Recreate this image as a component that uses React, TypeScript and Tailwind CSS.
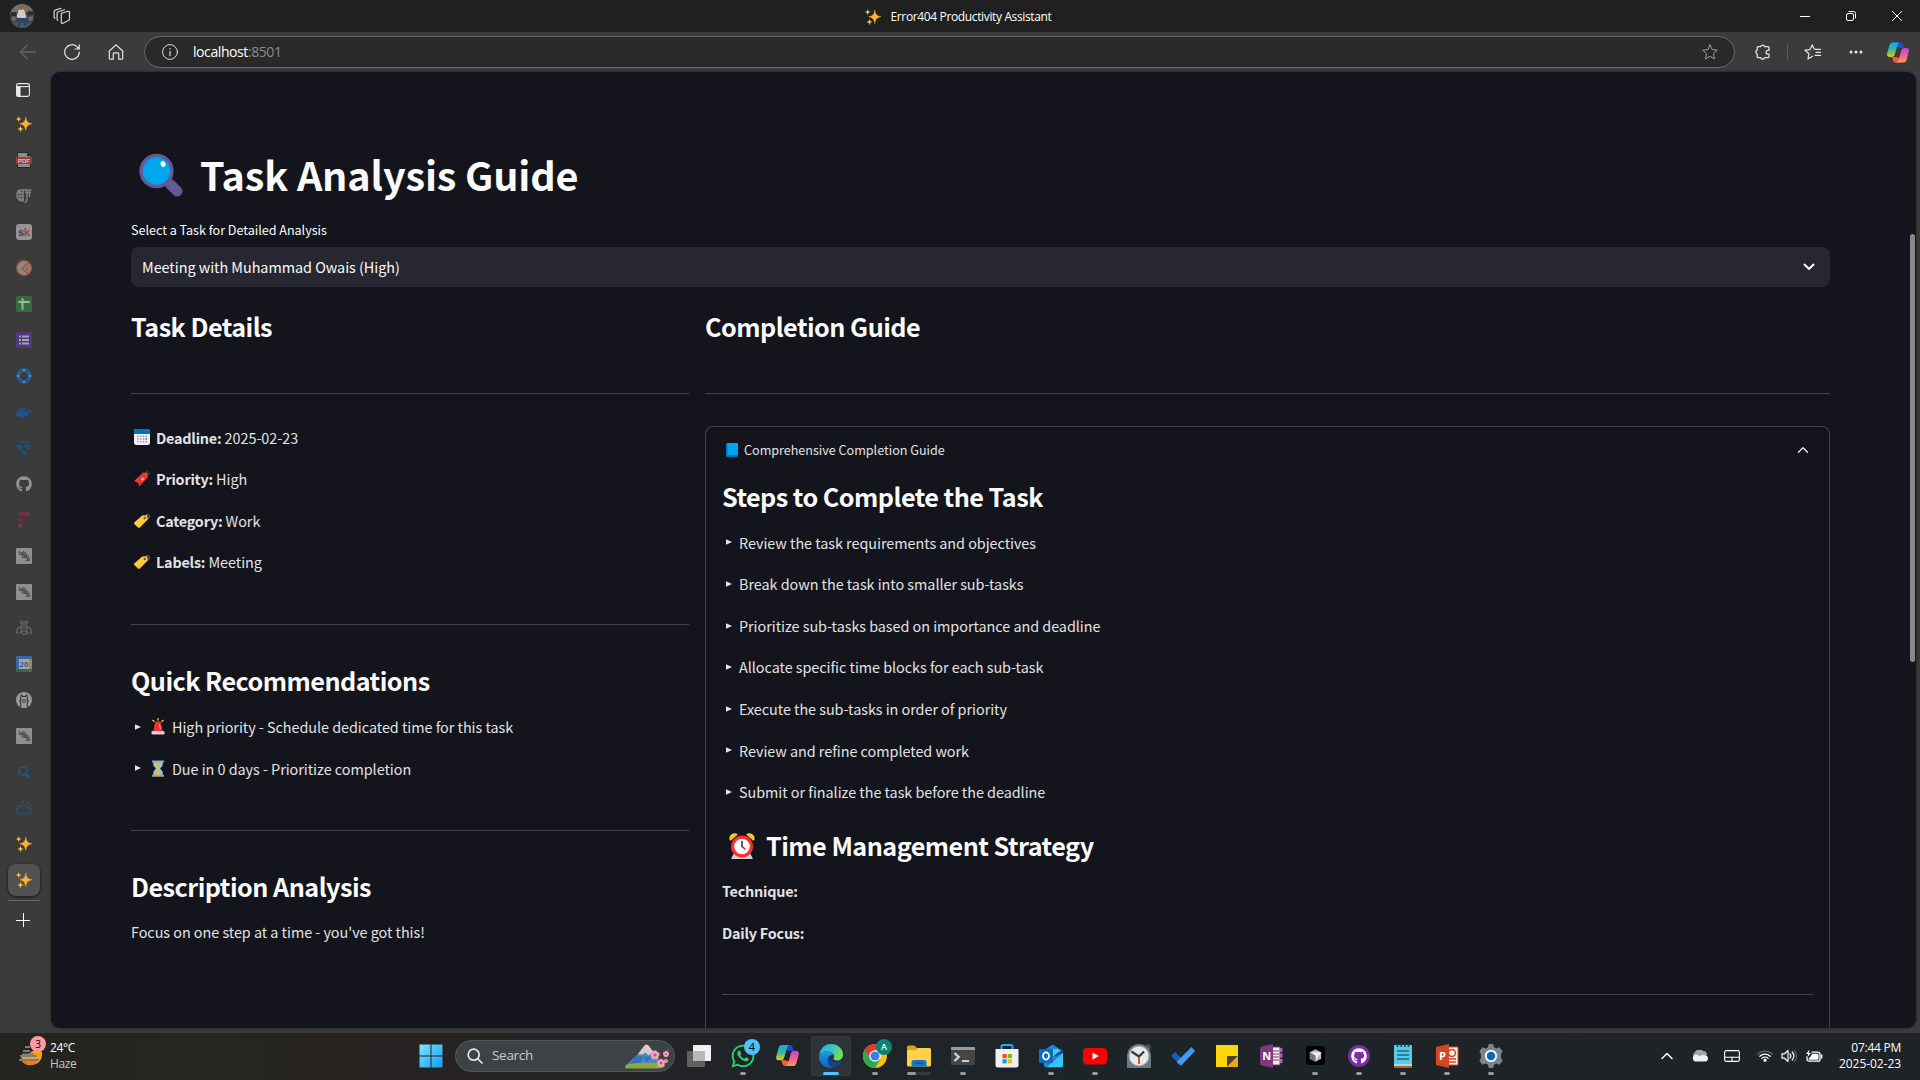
import React from "react";
import { FaGithub, FaWhatsapp, FaDocker } from "react-icons/fa";

const SANS = "font-['Noto_Sans_CJK_SC','Open_Sans',sans-serif]";

/* ---------- small drawings ---------- */

const Sparkles = ({ className = "size-4" }: { className?: string }) => (
  <svg viewBox="0 0 16 16" className={className}>
    <path d="M9.800.9c.6 4.500 1.800 5.900 6.200 6.800-4.400 1-5.600 2.500-6.200 7-.7-4.500-1.900-6-6.200-7 4.300-.9 5.500-2.300 6.200-6.800z" fill="#ffb02e" stroke="#ffb02e" strokeWidth=".4" strokeLinejoin="round" />
    <path d="M2.700.6c.3 1.700.8 2.200 2.400 2.500-1.600.4-2.100.9-2.400 2.500C2.400 4 1.900 3.500.3 3.100 1.900 2.800 2.400 2.300 2.700.6zM4.500 10.200c.3 1.900.9 2.400 2.700 2.700-1.800.4-2.400.9-2.700 2.800-.3-1.900-.9-2.400-2.700-2.800 1.800-.3 2.400-.8 2.700-2.700z" fill="#fcd53f" stroke="#fcd53f" strokeWidth=".3" />
  </svg>
);

const Magnifier = () => (
  <svg viewBox="0 0 44 44" className="h-11 w-11 shrink-0">
    <path d="M31 31l7.200 7.200" stroke="#635994" strokeWidth="10.500" strokeLinecap="round" />
    <path d="M26 26l5 5" stroke="#635994" strokeWidth="4" />
    <circle cx="17.500" cy="18" r="15.500" fill="#00a6ed" stroke="#635994" strokeWidth="3.400" />
    <ellipse cx="24" cy="11" rx="2.400" ry="3" fill="#fff" transform="rotate(-25 24 11)" />
  </svg>
);

const Calendar = () => (
  <svg viewBox="0 0 16 16" className="size-4">
    <rect width="16" height="16" rx="2.500" fill="#f3eef8" />
    <path d="M0 5V2.500A2.500 2.500 0 012.500 0h11A2.500 2.500 0 0116 2.500V5z" fill="#0074ba" />
    {[6.400, 9.200, 12].map((y) =>
      [3.200, 6, 8.800, 11.500].map((x) => (
        <rect key={x + "-" + y} x={x} y={y} width="1.500" height="1.500" rx=".4" fill={x === 11.500 && y === 9.200 ? "#0074ba" : "#998ea4"} />
      ))
    )}
  </svg>
);

const Tag = ({ color, red }: { color: string; red?: boolean }) => (
  <svg viewBox="0 0 16 16" className="size-4">
    {red ? (
      <>
        <path d="M0 10L9.200 1.400l4.200.6.500 4.200L5 15.500l-.6-3.500z" fill={color} />
        <path d="M8.500 6l.7 1.500 1.500.4-1.500.6-.6 1.500-.6-1.500-1.500-.6L8 7.500z" fill="#fcd5dc" />
        <path d="M12 3.500c1.500.5 3.500-.3 3.800-1.700M12 3c0-1.200.5-2.300 1.300-2.800" stroke="#a56953" fill="none" strokeWidth=".9" />
      </>
    ) : (
      <>
        <path d="M.5 9.300L8.200 2.400 13 2l1 4.300-7.900 8c-.8.8-1.500.8-2.300 0L.5 11.200c-.7-.7-.7-1.200 0-1.900z" fill={color} />
        <circle cx="10.800" cy="5" r="1.200" fill="#7d4533" />
        <path d="M10.800 5c.2-4.500 5.200-4 4.600-1.200-.3 1.200-1.500 2-2.300 2.200" stroke="#9b9b9b" fill="none" strokeWidth=".9" />
      </>
    )}
  </svg>
);

const Siren = () => (
  <svg viewBox="0 0 16 17" className="h-[17px] w-4">
    <path d="M3.200 14l1.500-7.500a3.300 3.300 0 016.600 0L12.800 14z" fill="#f8312f" />
    <path d="M9.500 6.500l.8 4" stroke="#f8a8a8" strokeWidth="1" strokeLinecap="round" />
    <rect x="1.500" y="13" width="13" height="3.500" rx="1.200" fill="#d3d3d3" />
    <path d="M8 0v2.600M2.500 2l2 1.800M13.500 2l-2 1.800" stroke="#fcd53f" strokeWidth="1.200" />
  </svg>
);

const Hourglass = () => (
  <svg viewBox="0 0 16 17" className="h-[17px] w-4">
    <path d="M3.300 2h9.400v2.700c0 2-2.500 2.700-2.500 3.800s2.500 2 2.500 4V15H3.300v-2.500c0-2 2.500-2.900 2.500-4s-2.500-1.800-2.500-3.800z" fill="#8ecbf0" />
    <path d="M4.500 4.500h7L8.500 8v3l3 2.500V15h-7v-1.500l3-2.500V8z" fill="#ffb02e" />
    <rect x="2" y=".5" width="12" height="2" rx=".5" fill="#9aa5b1" />
    <rect x="2" y="14.700" width="12" height="2" rx=".5" fill="#9aa5b1" />
  </svg>
);

const Book = () => (
  <svg viewBox="0 0 12 14" className="h-[14px] w-3">
    <rect width="12" height="14" rx="1" fill="#0074ba" />
    <rect x="1.500" width="10.500" height="12" rx=".6" fill="#00a6ed" />
  </svg>
);

const Alarm = () => (
  <svg viewBox="0 0 28 28" className="size-7 shrink-0">
    <path d="M6 21l-3 6h22l-3-6z" fill="#d3d3d3" />
    <path d="M1.500 7.500C.6 3.200 5.500-.3 10 2.200L3 8.500c-.6.400-1.300 0-1.500-1zM26.500 7.500c.9-4.300-4-7.800-8.500-5.300l7 6.300c.6.400 1.300 0 1.500-1z" fill="#f9c23c" />
    <circle cx="14" cy="14.500" r="11" fill="#f8312f" />
    <circle cx="14" cy="14.500" r="7.800" fill="#fff" />
    <path d="M14 9.500v5" stroke="#212121" strokeWidth="1.400" strokeLinecap="round" fill="none" />
    <path d="M14 14.500l3 2.500" stroke="#ca0b4a" strokeWidth="1.400" strokeLinecap="round" />
  </svg>
);

const Copilot = ({ className, id }: { className: string; id: string }) => (
  <svg viewBox="0 0 24 22" className={className}>
    <defs>
      <linearGradient id={id + "a"} x1="0" y1="0" x2="0" y2="1">
        <stop offset="0" stopColor="#1ba8f0" />
        <stop offset=".45" stopColor="#2fb6a8" />
        <stop offset="1" stopColor="#f0c80a" />
      </linearGradient>
      <linearGradient id={id + "b"} x1="0" y1="0" x2="0" y2="1">
        <stop offset="0" stopColor="#b04be8" />
        <stop offset=".5" stopColor="#ef5a92" />
        <stop offset="1" stopColor="#ff9a55" />
      </linearGradient>
    </defs>
    <path d="M10 0h4.500c1.600 0 2.400 1 2.900 2.500L18.500 6h-5L10 4z" fill="#1c4fd6" />
    <path d="M14 22H9.500c-1.600 0-2.400-1-2.900-2.500L5.500 16h5l3.500 2z" fill="#f4602c" />
    <path d="M6.500 0H14c-1.300.3-2 1.200-2.400 2.600L8.500 13c-.6 2-1.500 3-3.300 3H2.800C.5 16-.3 14.300.2 12L2.500 3.500C3.200 1.200 4.500 0 6.500 0z" fill={"url(#" + id + "a)"} />
    <path d="M17.500 22H10c1.300-.3 2-1.200 2.400-2.600L15.500 9c.6-2 1.500-3 3.300-3h2.400c2.300 0 3.100 1.700 2.600 4l-2.300 8.500c-.7 2.300-2 3.500-4 3.500z" fill={"url(#" + id + "b)"} />
  </svg>
);

/* ---------- browser chrome ---------- */

const line = { fill: "none", stroke: "currentColor", strokeLinecap: "round" as const, strokeLinejoin: "round" as const };

function TitleBar() {
  return (
    <div className="flex h-8 shrink-0 items-center bg-[#202020] text-white">
      <div className="flex flex-1 items-center gap-5 pl-[10px]">
        <svg viewBox="0 0 24 24" className="size-6">
          <defs><clipPath id="av"><circle cx="12" cy="12" r="12" /></clipPath></defs>
          <g clipPath="url(#av)">
            <rect width="24" height="24" fill="#45434a" />
            <path d="M0 0h24v8l-5-2-4 3-6-2-9 3z" fill="#77716d" />
            <path d="M1 8h5v4H1zM18 8h5v3h-5z" fill="#302b33" />
            <path d="M3 12l4 2-2 3-4-1zM18 13l5-1v4l-4 1z" fill="#69676c" />
            <path d="M0 19l6-1 12 1 6-1v6H0z" fill="#41604a" />
            <circle cx="11.500" cy="3.500" r="2" fill="#8c5f48" />
            <path d="M8.500 6l5.500-.5 2.500 7.500-2.500 2-5.500-1-2-1z" fill="#d5cabc" />
            <path d="M8.500 14h7l3 3-2 5h-2l-1-4-2.500 1-1.500 4H7.500z" fill="#2c4273" />
          </g>
        </svg>
        <svg viewBox="0 0 18 18" className="-ml-px size-[18px] text-[#d8d8d8]" {...line} strokeWidth="1.200">
          <path d="M8.300 6.300l6.700-2c.8-.2 1.500.2 1.500 1V12c0 .7-.3 1.200-1 1.500l-5.600 2.700c-.8.4-1.600 0-1.600-.9V7.600c0-.7.2-1.100 0-1.300zM4.800 13.200c-.6-.1-.7-.5-.7-1.100V6.300c0-.8.4-1.300 1.100-1.500l6.300-2M1.900 11.200c-.6-.1-.8-.5-.8-1.100V4.500c0-.8.400-1.200 1.100-1.400l5.800-1.800" />
        </svg>
      </div>
      <div className="flex items-center gap-[9px] pl-[5px] pt-px">
        <Sparkles />
        <span className="font-['Open_Sans',sans-serif] text-[12px] tracking-[-0.360px]">Error404 Productivity Assistant</span>
      </div>
      <div className="flex flex-1 items-center justify-end gap-9 pr-[18px]">
        <svg viewBox="0 0 10 10" className="size-[10px]" {...line}><path d="M0 5.500h10" /></svg>
        <svg viewBox="0 0 10 10" className="size-[10px]" {...line}><rect x=".5" y="2.500" width="7" height="7" rx="1.500" /><path d="M3 .5h4.500a2 2 0 012 2V7" /></svg>
        <svg viewBox="0 0 10 10" className="size-[10px]" {...line}><path d="M.3.300l9.400 9.400M9.700.3L.3 9.700" /></svg>
      </div>
    </div>
  );
}

function Toolbar() {
  return (
    <div className="flex h-10 shrink-0 items-center text-[#e4e4e4]">
      <div className="flex w-[144px] items-center gap-7 pl-5">
        <svg viewBox="0 0 16 16" className="size-4 text-[#7b7b7b]" {...line}><path d="M15.500 8H.5M7.300 1L.5 8l6.800 7" /></svg>
        <svg viewBox="0 0 16 16" className="size-4" {...line} strokeWidth="1.200"><path d="M15.300 8A7.300 7.300 0 1112.900 2.600L15.200 5M15.200.9V5h-4.100" /></svg>
        <svg viewBox="0 0 16 16" className="size-4" {...line} strokeWidth="1.200"><path d="M1.300 7L8 .9 14.700 7v7.200a1 1 0 01-1 1h-3v-5.500a.8.800 0 00-.8-.8H6.100a.8.800 0 00-.8.8v5.500h-3a1 1 0 01-1-1z" /></svg>
      </div>
      <div className="flex h-8 w-[1591px] items-center rounded-full border border-[#686868] bg-[#292929] pl-[17px] pr-4">
        <svg viewBox="0 0 16 16" className="size-4 text-[#d8d8d8]" {...line}><circle cx="8" cy="8" r="7.400" /><path d="M8 7.300v4.200M8 4.700v.2" strokeWidth="1.300" /></svg>
        <span className="ml-[15px] flex-1 font-['Open_Sans',sans-serif] text-[14px] leading-5 tracking-[-0.420px] text-white">localhost<span className="text-[#8c8c8c]">:8501</span></span>
        <svg viewBox="0 0 16 16" className="size-4 text-[#a0a0a0]" {...line}><path d="M8 .9l2.200 4.700 5 .6-3.700 3.500 1 5.200L8 12.400l-4.500 2.500 1-5.200L.8 6.200l5-.6z" /></svg>
      </div>
      <div className="flex flex-1 items-center">
        <svg viewBox="0 0 16 16" className="ml-5 size-4" {...line} strokeWidth="1.300"><path d="M3.200 2.700h2.500a2 2 0 013.900 0H13a1 1 0 011 1v2.600h-1a1.900 1.900 0 000 3.800h1v2.600a1 1 0 01-1 1H9.600a2 2 0 01-3.900 0H3.200a1 1 0 01-1-1V10a2 2 0 010-3.800V3.700a1 1 0 011-1z" /></svg>
        <div className="ml-4 h-4 w-px bg-[#5d5d5d]" />
        <svg viewBox="0 0 17 16" className="ml-4 h-4 w-[17px]" {...line} strokeWidth="1.200"><path d="M11 5.300h5.500M12 8.300h4.500M11 11.300h5.500M8.500 12.300L4 15l.9-5.200L1 6.200l5-.6L8.200.9l2 4" /></svg>
        <svg viewBox="0 0 14 4" className="ml-7 h-1 w-[14px]"><circle cx="2" cy="2" r="1.500" fill="#e8e8e8" /><circle cx="7" cy="2" r="1.500" fill="#e8e8e8" /><circle cx="12" cy="2" r="1.500" fill="#e8e8e8" /></svg>
        <Copilot id="ct" className="ml-6 h-[21px] w-[22px]" />
      </div>
    </div>
  );
}

const Lab = () => (
  <svg viewBox="0 0 16 16" className="size-4">
    <rect width="16" height="16" rx=".8" fill="#8f8f8f" />
    <text x="2.800" y="6.800" fontSize="5" fontWeight="700" fill="#333" fontFamily="Liberation Sans">lab</text>
    <text x="5.500" y="10" fontSize="5" fontWeight="700" fill="#333" fontFamily="Liberation Sans">lab</text>
    <text x="9" y="13" fontSize="4.500" fontWeight="700" fill="#333" fontFamily="Liberation Sans">.ai</text>
  </svg>
);

const tabs: React.ReactNode[] = [
  <Sparkles key="a" />,
  <svg key="b" viewBox="0 0 16 16" className="size-4"><path d="M1.500.5h10l3 3v12h-13z" fill="#8d8d8d" stroke="#262626" /><path d="M11 .5v3.500h3.500z" fill="#262626" /><rect y="5" width="16" height="7" fill="#a03a3a" /><text x="8" y="10.600" textAnchor="middle" fontSize="6" fontWeight="700" fill="#cfc4c4" fontFamily="Liberation Sans">PDF</text></svg>,
  <svg key="c" viewBox="0 0 16 16" className="size-4" fill="none" stroke="#838383" strokeWidth="1.400"><path d="M8 2H4.500C0 2.500-.5 11 4.500 12.500L8 13M8 5H1.500M8 8H1M8 11H2M4 2v11M7 1.500v12M8 2h7.500M9 4.500h6M11 3v9l-2 3M13.500 3v6" /></svg>,
  <svg key="d" viewBox="0 0 16 16" className="size-4"><rect width="16" height="16" rx="3" fill="#949494" /><text x="2" y="12" fontSize="11" fontWeight="700" fill="#343887" fontFamily="Liberation Sans" textLength="6">s</text><text x="7.800" y="12" fontSize="11.500" fontWeight="700" fill="#a14141" fontFamily="Liberation Sans">k</text></svg>,
  <svg key="e" viewBox="0 0 16 16" className="size-4"><circle cx="8" cy="8" r="7.200" fill="#8a8785" stroke="#a8603f" strokeWidth="1.400" /><path d="M12.500 3L6 8.500l6 5M12.500 7l-2 1.500 2 2" fill="none" stroke="#a2512f" strokeWidth="1.200" /></svg>,
  <svg key="f" viewBox="0 0 16 16" className="size-4"><rect width="16" height="16" rx="1.300" fill="#35693f" /><path d="M6.500 2.300v11.500M2.200 6h11.600" stroke="#a5b3a7" strokeWidth="2" /></svg>,
  <svg key="g" viewBox="0 0 16 16" className="size-4"><rect width="16" height="16" rx="1" fill="#50387c" /><path d="M3 4.500h2M6 4.500h7M3 8h2M6 8h7M3 11.500h2M6 11.500h7" stroke="#a8a1b6" strokeWidth="1.800" /></svg>,
  <svg key="h" viewBox="0 0 16 16" className="size-4"><circle cx="8" cy="8" r="5.800" fill="none" stroke="#27598f" strokeWidth="4.200" /><circle cx="8" cy="2.200" r="1" fill="#8ba0b8" /><circle cx="8" cy="13.800" r="1" fill="#8ba0b8" /><circle cx="2.200" cy="8" r="1" fill="#8ba0b8" /><circle cx="13.800" cy="8" r="1" fill="#8ba0b8" /></svg>,
  <FaDocker key="i" className="size-4 text-[#274f8c]" />,
  <svg key="j" viewBox="0 0 16 16" className="size-4" fill="#254d6e"><path d="M3 .5h6L7 3H4zM10 .8h4l-2 2.500H9zM0 5l4-1 3 3-3 4zM7.500 7.500L11 4l5 1-3 4.500-3-1zM4.500 12l3-2.500 4 3L8 16z" /></svg>,
  <FaGithub key="k" className="size-4 text-[#929292]" />,
  <svg key="l" viewBox="0 0 16 16" className="size-4"><rect x="2" y="0" width="12" height="4" rx="2" fill="#713049" /><rect x="2" y="5.800" width="9" height="4" rx="2" fill="#5f3139" /><circle cx="4.300" cy="7.800" r="2" fill="#7a3048" /><circle cx="4.300" cy="13.500" r="2.200" fill="#743a48" /></svg>,
  <Lab key="m" />,
  <Lab key="n" />,
  <svg key="o" viewBox="0 0 16 16" className="size-4" fill="none" stroke="#666a6e" strokeWidth="1.200"><circle cx="5.800" cy="2.500" r="1.500" /><circle cx="10.200" cy="2.500" r="1.500" /><rect x="5" y="5" width="6" height="9.500" rx="3" /><path d="M5 8h6M5 11h6M4.500 6.500C2 7.500.5 10 .7 13H4M11.500 6.500c2.500 1 4 3.500 3.800 6.500H12" /></svg>,
  <svg key="p" viewBox="0 0 16 16" className="size-4"><rect width="16" height="16" rx="1" fill="#3d64a5" /><rect x="12.800" y="3" width="3.200" height="10" fill="#a88a2c" /><rect y="12.800" width="13" height="3.200" fill="#376a41" /><path d="M12.800 12.800H16L12.800 16z" fill="#9c3f37" /><rect x="3" y="3" width="10" height="10" fill="#a3a3a3" /><text x="8" y="10.800" textAnchor="middle" fontSize="8" fontWeight="700" fill="#35569a" fontFamily="Liberation Sans">20</text></svg>,
  <svg key="q" viewBox="0 0 16 16" className="size-4"><circle cx="8" cy="8" r="8" fill="#999" /><path d="M4.800 15v-3.500c-1-1.200-1-3 0-4.300V4c0-1.500 1.500-1.500 1.700.5h3c.2-2 1.700-2 1.700-.5v3.200c1 1.300 1 3.100 0 4.300V15" fill="none" stroke="#333" strokeWidth="1.100" /><ellipse cx="8" cy="9" rx="2" ry="1.300" fill="none" stroke="#333" strokeWidth=".9" /></svg>,
  <Lab key="r" />,
  <svg key="s" viewBox="0 0 16 16" className="size-4" fill="none" stroke="#20598c" strokeWidth="1.500"><circle cx="7" cy="7" r="3.900" /><path d="M10 10l3.500 3.500" strokeWidth="1.900" /></svg>,
  <svg key="t" viewBox="0 0 16 16" className="size-4" fill="none" stroke="#2b6070" strokeWidth="1.100"><path d="M3.800 14a3.200 3.200 0 01-.3-6.400C4.500 4.500 10 3.800 11.500 7.500a3.300 3.300 0 01.7 6.500z" stroke="#2b5273" /><path d="M7.500.8v2M3.500 2l1 1.700M11.500 2l-1 1.700M.8 5l1.700 1M14.500 5l-1.700 1" /></svg>,
  <Sparkles key="u" />,
];

function Sidebar() {
  return (
    <div className="flex w-[51px] shrink-0 flex-col items-center pr-[3px]">
      <svg viewBox="0 0 14 14" className="mr-[2px] mt-[11px] size-[14px] shrink-0" fill="none" stroke="#e8e8e8" strokeWidth="1.100"><rect x=".6" y=".6" width="12.800" height="12.800" rx="1.800" /><path d="M1 3.600h12" /><path d="M1 4h3v9H1z" fill="#e8e8e8" /></svg>
      <div className="mt-[19px] flex flex-col gap-5">
        {tabs.map((t, i) => <div key={i} className="size-4">{t}</div>)}
      </div>
      <div className="mt-3 flex size-8 shrink-0 items-center justify-center rounded-lg bg-[#515151] shadow-[0_1px_3px_rgba(0,0,0,0.6)]"><Sparkles /></div>
      <div className="mt-1 h-px w-8 bg-[#686868]" />
      <svg viewBox="0 0 14 14" className="mr-[2px] mt-3 size-[14px] text-white" {...line}><path d="M7.500.5v13M.5 7.500h13" /></svg>
    </div>
  );
}

/* ---------- page ---------- */

const Rule = ({ className }: { className: string }) => <div className={"h-px shrink-0 bg-[#42434a] " + className} />;

const H = ({ children, className = "" }: { children: React.ReactNode; className?: string }) => (
  <h2 className={"flex h-[34px] shrink-0 items-center whitespace-nowrap text-[25.200px] font-bold leading-[34px] tracking-[-0.530px] text-[#fafafa] " + className}>{children}</h2>
);

const P = ({ children }: { children: React.ReactNode }) => (
  <div className="flex h-[25.600px] shrink-0 items-center whitespace-nowrap text-[14.400px] leading-[25.600px] tracking-[-0.040px]">{children}</div>
);

const Bullet = () => (
  <svg viewBox="0 0 6 6" className="mr-[7px] ml-1 size-[6px] shrink-0"><path d="M0 .3v5.400L6 3z" fill="#e6e6e6" /></svg>
);

const details = [
  { icon: <Calendar />, label: "Deadline:", value: "2025-02-23" },
  { icon: <Tag red color="#f8312f" />, label: "Priority:", value: "High" },
  { icon: <Tag color="#ffc83d" />, label: "Category:", value: "Work" },
  { icon: <Tag color="#ffc83d" />, label: "Labels:", value: "Meeting" },
];

const steps = [
  "Review the task requirements and objectives",
  "Break down the task into smaller sub-tasks",
  "Prioritize sub-tasks based on importance and deadline",
  "Allocate specific time blocks for each sub-task",
  "Execute the sub-tasks in order of priority",
  "Review and refine completed work",
  "Submit or finalize the task before the deadline",
];

function Page() {
  return (
    <div className={"relative flex h-[956px] w-[1865px] flex-col overflow-hidden rounded-[9px] bg-[#13141c] pl-20 text-[#e2e2e4] shadow-[0_0_3px_rgba(0,0,0,0.5)] " + SANS}>
      <div className="flex w-[1699px] flex-1 flex-col">
        <h1 className="mt-[72px] flex h-[60px] shrink-0 items-center text-[39.600px] font-bold leading-[60px] tracking-[-0.150px] text-[#fafafa]">
          <span className="ml-2 mr-[17px] pt-px"><Magnifier /></span><span>Task Analysis Guide</span>
        </h1>
        <div className="mt-4 h-5 shrink-0 text-[12.600px] leading-5 tracking-[-0.030px] text-[#fafafa]">Select a Task for Detailed Analysis</div>
        <div className="mt-[7px] flex h-10 shrink-0 items-center justify-between rounded-lg bg-[#262730] pl-[11px] pr-[15px] text-[14.400px] tracking-[-0.040px] text-[#fafafa]">
          <span>Meeting with Muhammad Owais (High)</span>
          <svg viewBox="0 0 12 8" className="h-2 w-3" {...line} strokeWidth="2"><path d="M1.500 1.500L6 6l4.500-4.500" /></svg>
        </div>
        <div className="flex flex-1 gap-4">
          <div className="flex w-[558px] flex-col">
            <H className="mt-[22px]">Task Details</H>
            <Rule className="mt-[50px]" />
            <div className="mt-[30.600px] flex flex-col gap-4">
              {details.map((d) => (
                <P key={d.label}>
                  <span className="ml-[3px] mr-[6px]">{d.icon}</span>
                  <span><b className="font-bold tracking-[-0.220px]">{d.label}</b> {d.value}</span>
                </P>
              ))}
            </div>
            <Rule className="mt-[49.400px]" />
            <H className="mt-[38px]">Quick Recommendations</H>
            <div className="mt-[16.600px] flex flex-col gap-4">
              <P><Bullet /><span className="ml-[2px]"><Siren /></span><span className="ml-[6px]">High priority - Schedule dedicated time for this task</span></P>
              <P><Bullet /><span className="ml-[2px]"><Hourglass /></span><span className="ml-[6px]">Due in 0 days - Prioritize completion</span></P>
            </div>
            <Rule className="mt-[48.400px]" />
            <H className="mt-[38px]">Description Analysis</H>
            <div className="mt-4"><P>Focus on one step at a time - you've got this!</P></div>
          </div>
          <div className="flex w-[1125px] flex-col">
            <H className="mt-[22px]">Completion Guide</H>
            <Rule className="mt-[50px]" />
            <div className="mt-8 flex flex-1 flex-col rounded-t-lg border border-b-0 border-[#41424a] px-4">
              <div className="mt-[11px] flex h-6 shrink-0 items-center text-[12.600px] leading-6 tracking-[-0.020px]">
                <span className="ml-1"><Book /></span><span className="ml-[6px]">Comprehensive Completion Guide</span>
                <svg viewBox="0 0 12 8" className="ml-auto mr-1 h-2 w-3" {...line} strokeWidth="1.500"><path d="M1.500 6.200L6 1.700l4.500 4.500" /></svg>
              </div>
              <H className="mt-[17px]">Steps to Complete the Task</H>
              <div className="mt-[16.600px] flex flex-col gap-4">
                {steps.map((s) => <P key={s}><Bullet /><span>{s}</span></P>)}
              </div>
              <H className="mt-[23.400px]"><span className="ml-[6px] mr-[10px] pt-[2px]"><Alarm /></span>Time Management Strategy</H>
              <div className="mt-4 flex flex-col gap-4 font-bold">
                <P><span className="tracking-[-0.230px]">Technique:</span></P>
                <P><span className="tracking-[-0.230px]">Daily Focus:</span></P>
              </div>
              <Rule className="mt-[49px]" />
            </div>
          </div>
        </div>
      </div>
      <div className="absolute right-[1px] top-[162px] h-[428px] w-[5px] rounded-full bg-[#898989]" />
    </div>
  );
}

/* ---------- taskbar ---------- */

type App = { icon: React.ReactNode; run?: boolean; active?: boolean; multi?: boolean };

const apps: App[] = [
  { icon: <svg viewBox="0 0 24 24" className="size-6"><rect x="6" y="1" width="18" height="16" rx="1" fill="#f2f2f2" /><rect y="7" width="18" height="16" rx="1" fill="#606060" /><rect x="6" y="7" width="12" height="10" fill="#b8b8b8" /></svg> },
  { run: true, icon: <div className="relative"><FaWhatsapp className="size-[26px] text-[#25d366]" /><div className="absolute -right-[4px] -top-[4px] flex size-4 items-center justify-center rounded-full bg-[#4cc2ff] text-[11px] leading-4 text-black">4</div></div> },
  { icon: <Copilot id="cb" className="h-[21px] w-[23px]" /> },
  {
    active: true, icon: (
      <svg viewBox="0 0 24 24" className="size-6">
        <defs>
          <linearGradient id="e1" x1="0" y1="0" x2="1" y2=".4"><stop offset="0" stopColor="#2aa8e0" /><stop offset=".5" stopColor="#35c1d0" /><stop offset="1" stopColor="#6be05a" /></linearGradient>
          <linearGradient id="e2" x1="0" y1="0" x2="0" y2="1"><stop offset="0" stopColor="#1f9de0" /><stop offset="1" stopColor="#0c62c4" /></linearGradient>
        </defs>
        <path d="M.3 11C1 4.500 6 0 12 0c7 0 12 5 12 10.500 0 4-3 6-6 6-2.500 0-4-1-3.500-2.200.8-1.300.9-2 .5-3.300C14 8.500 11 7.500 8.500 7.500 4.500 7.500 1.500 9 .3 11z" fill="url(#e1)" />
        <path d="M.2 12.500C.5 9 4 7.200 8.500 7.200c3 0 5.500 1.500 6.500 3.800-3-1-6 1.500-6 5.500 0 3.500 2.500 6.500 5.500 7.200-.8.200-1.700.3-2.500.3C5.500 24-.2 19.500.2 12.500z" fill="url(#e2)" />
        <path d="M9.500 12.500C7 17 11 23.500 15 23.500c3-.8 5.500-2.500 7-5 .3-.6-.2-1-.8-.7-5 2-10-.1-11.700-5.300z" fill="#12468f" />
      </svg>
    ),
  },
  {
    run: true, icon: (
      <div className="relative">
        <svg viewBox="0 0 24 24" className="size-6"><circle cx="12" cy="12" r="12" fill="#fbc116" /><path d="M12 12L1.600 6A12 12 0 0012 24l5.500-9z" fill="#2da94f" /><path d="M1.600 6A12 12 0 0122.400 6H12L7 14z" fill="#e33b2e" /><circle cx="12" cy="12" r="5.800" fill="#fff" /><circle cx="12" cy="12" r="4.500" fill="#3c7df0" /></svg>
        <div className="absolute -right-[5px] -top-[5px] flex size-4 items-center justify-center rounded-full bg-[#0a8476] text-[9px] font-semibold leading-4 text-white">A</div>
      </div>
    ),
  },
  { multi: true, icon: <svg viewBox="0 0 24 24" className="size-6"><path d="M0 3a1.500 1.500 0 011.500-1.500h6L10 4h6v4H0z" fill="#e0a10c" /><path d="M0 6h9l2-2h11.500A1.500 1.500 0 0124 5.500V21a1.500 1.500 0 01-1.500 1.500h-21A1.500 1.500 0 010 21z" fill="#ffd04c" /><path d="M4.500 22.500V18A2 2 0 016.500 16h11a2 2 0 012 2v4.500z" fill="#0f7bc6" /><rect x="8" y="18.500" width="8" height="1.500" rx=".7" fill="#0a5c9c" /></svg> },
  { run: true, icon: <svg viewBox="0 0 24 24" className="size-6"><rect y="3" width="24" height="18" rx="1" fill="#454545" /><path d="M0 6V4a1 1 0 011-1h22a1 1 0 011 1v2z" fill="#999" /><path d="M3.500 9l4.200 4-4.200 4" fill="none" stroke="#d0d0d0" strokeWidth="2.400" /><path d="M11 17h7" stroke="#f0f0f0" strokeWidth="1.600" /></svg> },
  { icon: <svg viewBox="0 0 24 24" className="size-6"><path d="M6.500 6V2.500a1.500 1.500 0 011.500-1.500h8a1.500 1.500 0 011.500 1.500V6" fill="none" stroke="#20aef0" strokeWidth="2" /><path d="M.5 5h23v16a2.500 2.500 0 01-2.500 2.500H3A2.500 2.500 0 01.5 21z" fill="#f0f0f0" /><path d="M7.500 10h4.200v4.200H7.500z" fill="#f25022" /><path d="M12.700 10h4.200v4.200h-4.200z" fill="#7fba00" /><path d="M7.500 15.200h4.200v4.200H7.500z" fill="#00a4ef" /><path d="M12.700 15.200h4.200v4.200h-4.200z" fill="#ffb900" /></svg> },
  { run: true, icon: <svg viewBox="0 0 24 24" className="size-6"><path d="M4 7l9.500-6.500L24 7v14.500A2 2 0 0122 23.500H7a2 2 0 01-2-2z" fill="#1a86d8" /><path d="M6 5h13l4 4-9 5-8-3z" fill="#51c7f2" /><path d="M24 9l-16 14h14.500a1.500 1.500 0 001.500-1.500z" fill="#37c3f3" /><path d="M13 14l11-5v-3l-6 3z" fill="#0d4f9f" /><rect y="5" width="14" height="14" rx="1.200" fill="#0f6cbd" /><ellipse cx="7" cy="12" rx="3" ry="3.600" fill="none" stroke="#fff" strokeWidth="1.800" /></svg> },
  { run: true, icon: <svg viewBox="0 0 24 24" className="size-6"><rect y="4" width="24" height="16.500" rx="4" fill="#f00" /><path d="M9.500 8.500v7.200l6.200-3.600z" fill="#fff" /></svg> },
  { icon: <svg viewBox="0 0 24 24" className="size-6"><circle cx="21" cy="3" r="3" fill="#4e4b4b" /><path d="M0 24V12a12 12 0 0124 0v12z" fill="#6c7a85" /><circle cx="12" cy="12" r="10" fill="#e8e8e8" stroke="#9aa4ab" strokeWidth="1" /><path d="M4.500 7.500L12 12.500l5-5" fill="none" stroke="#3a3a3a" strokeWidth="2.200" /><path d="M12 13v7" stroke="#d9480f" strokeWidth="1.800" /></svg> },
  { icon: <svg viewBox="0 0 24 24" className="size-6"><path d="M0 12l4-4 8.500 8-4 4.500z" fill="#185abd" /><path d="M5.500 18L20.500 3 24 7 10 21.700z" fill="#3f9bf0" /></svg> },
  { icon: <svg viewBox="0 0 22 22" className="size-[22px]"><rect width="22" height="22" rx=".6" fill="#ffd60a" /><path d="M11 11h11L11 22z" fill="#4a4532" /><path d="M22 11v11H11z" fill="#e9a912" /></svg> },
  { icon: <svg viewBox="0 0 24 24" className="size-6"><path d="M12 3h9v18h-9z" fill="#f4eef4" stroke="#80397b" /><path d="M14 7h6M14 10h6M14 13h6M14 16h6" stroke="#80397b" /><path d="M21 4h2.500v4H21zM21 9.500h2.500v4H21zM21 15h2.500v4H21z" fill="#a768a5" /><path d="M1 3l13-3v24L1 21z" fill="#80397b" /><text x="3.200" y="16" fontSize="11" fontWeight="700" fill="#fff" fontFamily="Open Sans">N</text></svg> },
  { run: true, icon: <svg viewBox="0 0 20 20" className="size-[19px]"><rect width="20" height="20" rx="3.500" fill="#000" /><path d="M10 3.500l6 3v7l-6 3-6-3v-7z" fill="#b5b5b5" /><path d="M4 6.500h12L10 16.500V10z" fill="#efefef" /><path d="M4 6.500l6 3.500v6.500l-6-3z" fill="#777" /></svg> },
  { run: true, icon: <div className="flex size-[22px] items-center justify-center rounded-full bg-[#7a2da5]"><FaGithub className="size-4 text-white" /></div> },
  { run: true, icon: <svg viewBox="0 0 18 24" className="h-6 w-[18px]"><rect y="1" width="18" height="22" rx="1" fill="#5cc8e6" /><path d="M0 21h18v2a1 1 0 01-1 1H1a1 1 0 01-1-1z" fill="#b8601e" /><path d="M0 20.500h18v1.200H0z" fill="#f3f3f3" /><path d="M3.500 0v3M7.200 0v3M10.900 0v3M14.500 0v3" stroke="#0f4a66" strokeWidth="1.600" /><path d="M3 7h12M3 11h12M3 15h12" stroke="#12678a" strokeWidth="1.600" /></svg> },
  { run: true, icon: <svg viewBox="0 0 24 24" className="size-6"><path d="M12 3h11v18H12z" fill="#faf0ec" stroke="#d24726" /><circle cx="17" cy="9" r="3.500" fill="none" stroke="#d24726" strokeWidth="1.500" /><path d="M14 15h7M14 18h7" stroke="#d24726" strokeWidth="1.300" /><path d="M1 3l13-3v24L1 21z" fill="#d24726" /><text x="4" y="16" fontSize="11" fontWeight="700" fill="#fff" fontFamily="Open Sans">P</text></svg> },
  { run: true, icon: <svg viewBox="0 0 24 24" className="size-6"><path d="M9.800 0h4.400l.8 3.200 2.200 1.200L20.300 3.300l3.300 3.700-1.500 3.200v3.600l1.500 3.200-3.300 3.700-3.100-1.100-2.200 1.200-.8 3.200H9.800L9 20.800l-2.200-1.200-3.100 1.100L.4 17l1.500-3.200v-3.600L.4 7l3.300-3.700 3.100 1.100L9 3.200z" fill="#7a848d" /><circle cx="12" cy="12" r="6.200" fill="#f2f2f2" /><circle cx="12" cy="12" r="4.200" fill="#0d66b8" /></svg> },
];

const blossoms = [[31, 14, 4.500], [37, 22, 4], [42, 13, 3], [42, 20, 2]];

function Taskbar() {
  return (
    <div className="flex h-12 shrink-0 items-center border-t border-[#3a3a3a] bg-[linear-gradient(90deg,#232420_0%,#26251f_10%,#262223_24%,#202428_40%,#1d2428_60%,#1f2326_100%)] pb-[2px] font-['Open_Sans',sans-serif] text-white">
      <div className="flex w-[409px] items-center pl-[19px]">
        <div className="relative size-[26px]">
          <svg viewBox="0 0 26 26" className="size-[26px]"><path d="M2 14c2-1 6-1 9-4 3-3 8-3 12-1 1 8-4 13-11 13-5 0-8-3-10-8z" fill="#f6a11c" /><path d="M2 17h17c-3 7-13 7-17 0z" fill="#ef7d16" /><path d="M4 8h7M6 4h5M1 13h17M0 17h20M3 11.500h12" stroke="#7d7d7d" strokeWidth="1.800" /></svg>
          <div className="absolute -top-[7px] left-[11px] flex size-4 items-center justify-center rounded-full bg-[#ff99a4] text-[10px] leading-4 text-black">3</div>
        </div>
        <div className="ml-[5px] flex flex-col text-[12px] leading-4 tracking-[-0.400px]"><span>24°C</span><span className="text-[#c6c6c6]">Haze</span></div>
      </div>
      <div className="flex w-11 items-center justify-center">
        <svg viewBox="0 0 24 24" className="size-6"><defs><linearGradient id="w" x1="0" y1="0" x2="1" y2="1"><stop offset="0" stopColor="#7fe4ff" /><stop offset="1" stopColor="#0f9cf5" /></linearGradient></defs><path d="M.5.500h11v11H.5zM12.500.5h11v11h-11zM.5 12.500h11v11H.5zM12.500 12.500h11v11h-11z" fill="url(#w)" /></svg>
      </div>
      <div className="ml-[2px] mr-[2px] flex h-8 w-[220px] items-center rounded-full border border-[#51575a] bg-[#3d4245] pl-[11px] pr-1">
        <svg viewBox="0 0 16 16" className="size-4 text-[#e6e6e6]" {...line} strokeWidth="1.700"><circle cx="6.700" cy="6.700" r="5.500" /><path d="M11 11l4 4" /></svg>
        <span className="ml-[9px] flex-1 text-[13.500px] tracking-[-0.300px] text-[#c9cbcc]">Search</span>
        <svg viewBox="0 0 46 30" className="h-[30px] w-[46px]">
          <path d="M1 25L15 12l6-7 4 0 14 20z" fill="#4a86c8" />
          <path d="M14 13l6.500-8.500c1.300-1.500 2.700-1.500 4 0l7 9-4-2-3 3-3-3-3 2z" fill="#d9cbd0" />
          <path d="M12 15l-6 8h10l4-9 2 8 6-6z" fill="#2d62a8" opacity=".6" />
          <path d="M1 26c0-2.500 6-4 18-4 10 0 20-1 22 2 0 2-3 3.500-8 3.500H4c-2 0-3-.5-3-1.500z" fill="#8fa83c" />
          <path d="M44 8c-1 8-4 12-10 15" stroke="#8a5a5a" fill="none" />
          {blossoms.map(([x, y, r], i) => (
            <g key={i}>
              {[0, 72, 144, 216, 288].map((a) => <circle key={a} cx={x} cy={y - r * 0.55} r={r * 0.5} fill="#f5a3ba" transform={`rotate(${a} ${x} ${y})`} />)}
              <circle cx={x} cy={y} r={r / 3} fill="#d8486e" />
            </g>
          ))}
        </svg>
      </div>
      {apps.map((a, i) => (
        <div key={i} className={a.active ? "relative mx-[2px] flex h-10 w-10 items-center justify-center rounded bg-[#2d3336] ring-1 ring-inset ring-[#363b3e]" : "relative flex h-10 w-11 items-center justify-center"}>
          {a.icon}
          {a.run && <div className="absolute bottom-[1px] h-[3px] w-[6px] rounded-full bg-[#9a9a9a]" />}
          {a.active && <div className="absolute bottom-[1px] h-[3px] w-4 rounded-full bg-[#4cc2ff]" />}
          {a.multi && <div className="absolute bottom-[1px] h-[3px] w-6 rounded-full bg-[#33383b]"><div className="h-[3px] w-[9px] rounded-full bg-[#9a9a9a]" /></div>}
        </div>
      ))}
      <div className="flex flex-1 items-center justify-end pr-[19px]">
        <svg viewBox="0 0 12 8" className="h-2 w-3" {...line} strokeWidth="1.500"><path d="M1 6.500l5-5 5 5" /></svg>
        <svg viewBox="0 0 18 12" className="ml-[18px] h-3 w-[18px]"><path d="M3 8a4 4 0 011-6 5 5 0 018-1 4 4 0 014 4z" fill="#a5a5a5" /><path d="M4 11.500a3.500 3.500 0 010-6.500c2-.5 3 0 4 1l4-1c3-.5 5 1 5 3.500 0 2-1 3-3 3z" fill="#f2f2f2" /></svg>
        <svg viewBox="0 0 16 12" className="ml-[15px] h-3 w-4" {...line} strokeWidth="1.100"><rect x=".6" y=".6" width="14.800" height="10.800" rx="1.600" /><path d="M1 7.300h14M8 7.300v4" /></svg>
        <svg viewBox="0 0 16 12" className="ml-[17px] h-3 w-4" {...line} strokeWidth="1.300"><path d="M.8 4.200a10.200 10.200 0 0114.400 0" stroke="#5e6265" /><path d="M2.800 6.300a7.400 7.400 0 0110.400 0M4.900 8.400a4.400 4.400 0 016.200 0" /><circle cx="8" cy="10.200" r="1" fill="#fff" /></svg>
        <svg viewBox="0 0 16 14" className="ml-2 h-[14px] w-4" {...line} strokeWidth="1.200"><path d="M1 4.800h2.500L7 1.500v11L3.500 9.200H1zM9 4.800c1 1.300 1 3.100 0 4.400M11.200 3c2 2.400 2 5.600 0 8" /><path d="M13.400 1.500c2.800 3.500 2.800 7.500 0 11" stroke="#5e6265" /></svg>
        <svg viewBox="0 0 18 14" className="ml-[8px] h-[14px] w-[18px]" {...line} strokeWidth="1.300"><path d="M7 3.200h6a2 2 0 012 2v5a2 2 0 01-2 2H4a2 2 0 01-2-2V8M16.700 6v3" /><path d="M7 4.700h5.500a1 1 0 011 1v4a1 1 0 01-1 1h-8a1 1 0 01-1-1L6 7z" fill="#fff" stroke="none" /><path d="M4.500.5L1 5h2.200L2.500 8 6 4H3.800z" fill="#fff" stroke="none" /></svg>
        <div className="ml-4 flex w-[62px] flex-col items-end whitespace-nowrap text-[12px] leading-4"><span className="tracking-[-0.250px]">07:44 PM</span><span className="tracking-[-0.060px]">2025-02-23</span></div>
      </div>
    </div>
  );
}

export default function App() {
  return (
    <div className="flex h-[1080px] w-[1920px] flex-col overflow-hidden bg-[#3b3b3b]">
      <TitleBar />
      <Toolbar />
      <div className="flex h-[960px] shrink-0"><Sidebar /><Page /></div>
      <Taskbar />
    </div>
  );
}
